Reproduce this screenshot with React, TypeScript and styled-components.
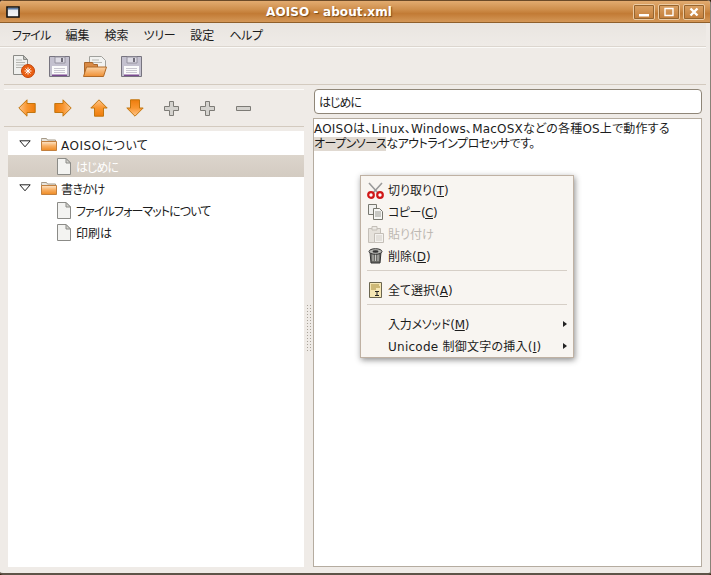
import styled, { createGlobalStyle } from "styled-components";
import type { ReactNode } from "react";

const GlobalStyle = createGlobalStyle`
  html, body {
    margin: 0;
    padding: 0;
    background: #3a2210;
  }
  * {
    box-sizing: border-box;
  }
`;

const Window = styled.div`
  width: 711px;
  height: 575px;
  display: flex;
  flex-direction: column;
  background: #efebe7;
  border-radius: 4px 4px 3px 3px;
  border-bottom: 2px solid #5e5448;
  border-right: 1px solid #8a8278;
  font-family: "DejaVu Sans", "Noto Sans CJK JP", sans-serif;
  font-size: 12px;
  font-feature-settings: "palt";
  color: #1c1c1c;
  overflow: hidden;
`;

const TitleBar = styled.div`
  height: 23px;
  flex: none;
  display: flex;
  align-items: center;
  padding: 0 5px 0 6px;
  border-top: 1px solid #6b4a28;
  border-bottom: 1px solid #8f5f2a;
  background: linear-gradient(#e2ab70 0%, #cf8f4c 40%, #c27b35 60%, #d49757 100%);
`;

const Title = styled.div`
  flex: 1;
  text-align: center;
  padding-left: 5px;
  color: #fff;
  font-family: "DejaVu Sans", sans-serif;
  font-weight: bold;
  font-size: 12px;
  letter-spacing: 0.1px;
  white-space: pre;
  text-shadow: 1px 1px 1px #7a4a18;
`;

const WinButtons = styled.div`
  display: flex;
  gap: 3px;
`;

const WinButton = styled.div`
  width: 22px;
  height: 16px;
  display: flex;
  align-items: center;
  justify-content: center;
  border: 1px solid #edcba3;
  outline: 1px solid #96652f;
  outline-offset: -2px;
  border-radius: 2px;
  background: linear-gradient(#dba265, #c27c38);
`;

const MenuBar = styled.div`
  height: 24px;
  flex: none;
  display: flex;
  align-items: center;
  gap: 15px;
  padding: 0 0 1px 12px;
  margin-right: 4px;
  background: linear-gradient(#e9e5e0, #efebe7);
  border-bottom: 1px solid #dcd6cf;
  box-shadow: 0 1px 0 #fbfaf8;
`;

const Label = styled.span<{ $tight?: number }>`
  letter-spacing: ${(p) => p.$tight ?? 0}px;
  white-space: nowrap;
`;

const ToolBar = styled.div`
  height: 38px;
  flex: none;
  display: flex;
  align-items: center;
  margin: 0 4px;
  padding: 1px 0 0 1px;
  border-bottom: 1px solid #d3cabf;
`;

const ToolButton = styled.div`
  width: 36px;
  height: 36px;
  display: flex;
  align-items: center;
  justify-content: center;
`;

const Paned = styled.div`
  flex: 1;
  min-height: 0;
  display: flex;
  padding: 4px 8px 6px 4px;
`;

const LeftPane = styled.div`
  width: 300px;
  flex: none;
  display: flex;
  flex-direction: column;
`;

const NavBar = styled.div`
  height: 38px;
  flex: none;
  display: flex;
  align-items: center;
  padding-left: 5px;
  border-top: 1px solid #fbfaf8;
  border-bottom: 1px solid #d3cabf;
`;

const Tree = styled.div`
  flex: 1;
  margin: 4px 0 0 4px;
  padding-top: 2px;
  background: #fff;
`;

const TreeRow = styled.div<{ $selected?: boolean; $depth: number }>`
  height: 22px;
  display: flex;
  align-items: center;
  gap: ${(p) => (p.$depth ? 5 : 4)}px;
  padding-left: ${(p) => (p.$depth ? 49 : 5)}px;
  background: ${(p) => (p.$selected ? "linear-gradient(#dcd5cc, #d3cbc1)" : "transparent")};
  color: ${(p) => (p.$selected ? "#fff" : "#1c1c1c")};
`;

const Expander = styled.div`
  width: 23px;
  margin-right: 1px;
  flex: none;
  display: flex;
  justify-content: center;
`;

const Gutter = styled.div`
  width: 9px;
  flex: none;
  display: flex;
  align-items: center;
  justify-content: center;
`;

const RightPane = styled.div`
  flex: 1;
  min-width: 0;
  display: flex;
  flex-direction: column;
  gap: 4px;
`;

const TitleEntry = styled.div`
  height: 25px;
  flex: none;
  margin-left: 1px;
  padding: 0 4px;
  display: flex;
  align-items: center;
  background: #fff;
  border: 1px solid #8f8678;
  border-radius: 4px;
`;

const Body = styled.div`
  position: relative;
  flex: 1;
  padding: 2px 0 0 0;
  background: #fff;
  border: 1px solid #b5aca0;
  line-height: 15px;
`;

const TextLine = styled.div<{ $tight: number }>`
  height: 15px;
  padding-top: 1px;
  white-space: nowrap;
  letter-spacing: ${(p) => p.$tight}px;
`;

const Selected = styled.span`
  background: #e0d9d1;
`;

const Menu = styled.div`
  position: absolute;
  left: 46px;
  top: 56px;
  width: 214px;
  padding: 3px 6px 0;
  background: #f8f5f1;
  border: 1px solid #bfb1a3;
  box-shadow: 1px 2px 6px rgba(0, 0, 0, 0.45);
`;

const MenuRow = styled.div<{ $disabled?: boolean }>`
  height: 22px;
  display: flex;
  align-items: center;
  gap: 4px;
  color: ${(p) => (p.$disabled ? "#bdb8b2" : "#1c1c1c")};
`;

const MenuIcon = styled.div`
  width: 17px;
  height: 17px;
  flex: none;
  display: flex;
  align-items: center;
  justify-content: center;
`;

const MenuLabel = styled.div<{ $tight?: number }>`
  flex: 1;
  padding-top: 2px;
  white-space: nowrap;
  letter-spacing: ${(p) => p.$tight ?? 0}px;
  u {
    text-underline-offset: 1px;
  }
`;

const SubArrow = styled.div`
  width: 0;
  height: 0;
  border-left: 4px solid #222;
  border-top: 3.5px solid transparent;
  border-bottom: 3.5px solid transparent;
`;

const MenuSep = styled.div`
  height: 12px;
  padding-top: 3px;
  &::after {
    content: "";
    display: block;
    height: 1px;
    background: #d6cfc7;
  }
`;

function Floppy() {
  return (
    <svg width="23" height="23" viewBox="0 0 23 23">
      <path d="M1.5 1.5h20v20h-20z" fill="#c4c1cf" stroke="#77747f" />
      <path d="M7 2h10v6H7z" fill="#dedce5" stroke="#9693a0" />
      <path d="M13 3h2v4h-2z" fill="#6f6c78" />
      <path d="M4 11h15v10H4z" fill="#fbfbfb" />
      <path d="M6 13.5h11M6 15.5h11M6 17.5h11" stroke="#c9c7d0" />
      <path d="M4 19.5h15V21H4z" fill="#7a4a90" />
    </svg>
  );
}

function NewDoc() {
  return (
    <svg width="23" height="23" viewBox="0 0 23 23">
      <path d="M1.5.5h10l4 4v15h-14z" fill="#f0f0ee" stroke="#8a8a86" />
      <path d="M11.5.5v4h4z" fill="#bdbdb8" stroke="#8a8a86" />
      <path d="M4 5h6M4 7.5h9M4 10h9M4 12.5h6" stroke="#b5b5b0" />
      <circle cx="16" cy="16" r="6.5" fill="#ea5f12" stroke="#c0440a" />
      <path d="M16 12.5v7M12.5 16h7M13.5 13.5l5 5M18.5 13.5l-5 5" stroke="#fff" strokeWidth="1" />
    </svg>
  );
}

function OpenFolder() {
  return (
    <svg width="24" height="23" viewBox="0 0 24 23">
      <defs>
        <linearGradient id="openFill" x1="0" y1="0" x2="0" y2="1">
          <stop offset="0" stopColor="#fbd3a6" />
          <stop offset="1" stopColor="#ef8f33" />
        </linearGradient>
      </defs>
      <path d="M6.5 1.5h12l4 4v10h-16z" fill="#f2f2f0" stroke="#a0a09c" />
      <path d="M9 5h7M9 7.5h10" stroke="#b9b9b4" />
      <path d="M1.5 7.5h8l1 2h4v12h-13z" fill="#d98a45" stroke="#a8652a" />
      <path d="M3.5 12h20l-3 9.5H.5z" fill="url(#openFill)" stroke="#b06a28" />
    </svg>
  );
}

function Arrow({ rotate }: { rotate: number }) {
  return (
    <svg width="18" height="18" viewBox="0 0 18 18" style={{ transform: `rotate(${rotate}deg)` }}>
      <defs>
        <linearGradient id="arrowFill" x1="0" y1="0" x2="0" y2="1">
          <stop offset="0" stopColor="#fdc58c" />
          <stop offset="0.5" stopColor="#f9962f" />
          <stop offset="1" stopColor="#ee7c0c" />
        </linearGradient>
      </defs>
      <path d="M9 .8 17.2 9H13.5V17.2H4.5V9H.8z" fill="url(#arrowFill)" stroke="#c2760f" strokeLinejoin="round" />
    </svg>
  );
}

function GrayPlus() {
  return (
    <svg width="17" height="17" viewBox="0 0 17 17">
      <path d="M6.5 1.5h4v5h5v4h-5v5h-4v-5h-5v-4h5z" fill="#d4d2ce" stroke="#7d7b76" />
    </svg>
  );
}

function GrayMinus() {
  return (
    <svg width="17" height="17" viewBox="0 0 17 17">
      <path d="M1.5 6.5h14v4h-14z" fill="#d4d2ce" stroke="#7d7b76" />
    </svg>
  );
}

function TreeTriangle() {
  return (
    <svg width="12" height="8" viewBox="0 0 12 8">
      <path d="M.8.8h10.4L6 6.8z" fill="#fff" stroke="#222" />
    </svg>
  );
}

function FolderIcon() {
  return (
    <svg width="16" height="14" viewBox="0 0 16 14">
      <defs>
        <linearGradient id="folderFill" x1="0" y1="0" x2="0" y2="1">
          <stop offset="0" stopColor="#fde6cb" />
          <stop offset="0.5" stopColor="#f7ad60" />
          <stop offset="1" stopColor="#ee8a22" />
        </linearGradient>
      </defs>
      <path d="M.5 2.5V1.5h5l1 1.5h8v9H.5z" fill="#e8e4dc" stroke="#a59a88" />
      <path d="M.5 4.5h15v9H.5z" fill="url(#folderFill)" stroke="#c2803f" />
    </svg>
  );
}

function DocIcon() {
  return (
    <svg width="14" height="17" viewBox="0 0 14 17">
      <path d="M.5.5h8.5l4.5 4.5v11.5h-13z" fill="#f3f3f1" stroke="#8b8b87" />
      <path d="M9 .5V5h4.5z" fill="#d5d5d0" stroke="#8b8b87" />
    </svg>
  );
}

function Scissors() {
  return (
    <svg width="17" height="17" viewBox="0 0 17 17">
      <path d="M2 1l9 10M15 1L6 11" stroke="#9a9a9a" strokeWidth="1.6" />
      <circle cx="4" cy="13" r="2.8" fill="#fff" stroke="#d01818" strokeWidth="2.2" />
      <circle cx="13" cy="13" r="2.8" fill="#fff" stroke="#d01818" strokeWidth="2.2" />
    </svg>
  );
}

function CopyIcon() {
  return (
    <svg width="16" height="16" viewBox="0 0 16 16">
      <path d="M.5.5h8v10h-8z" fill="#f0f0ee" stroke="#77776f" />
      <path d="M5.5 4.5h6l3 3v8h-9z" fill="#f6f6f4" stroke="#77776f" />
      <path d="M7 8h6M7 10h6M7 12h6" stroke="#9a9a94" />
    </svg>
  );
}

function PasteIcon() {
  return (
    <svg width="16" height="17" viewBox="0 0 16 17">
      <path d="M.5 2.5h12v14H.5z" fill="#e6e2dc" stroke="#c4bfb8" />
      <path d="M4 .5h5v3.5H4z" fill="#ece9e4" stroke="#c4bfb8" />
      <path d="M6.5 7.5h9v9h-9z" fill="#f4f2ef" stroke="#c4bfb8" />
      <path d="M8 10h6M8 12h6M8 14h6" stroke="#d2cdc6" />
    </svg>
  );
}

function TrashIcon() {
  return (
    <svg width="15" height="16" viewBox="0 0 15 16">
      <path d="M2 4h11l-1 11H3z" fill="#6a6a66" stroke="#333" />
      <path d="M5 6v7M7.5 6v7M10 6v7" stroke="#c8c8c4" />
      <ellipse cx="7.5" cy="3.5" rx="6.5" ry="2.8" fill="#b8b8b4" stroke="#333" />
      <ellipse cx="7.5" cy="3.5" rx="3" ry="1.2" fill="#333" />
    </svg>
  );
}

function SelectAllIcon() {
  return (
    <svg width="13" height="16" viewBox="0 0 13 16">
      <path d="M.5.5h12v15H.5z" fill="#f6e7b4" stroke="#6b6650" />
      <path d="M2 3h8M2 5h9M2 7h5" stroke="#a58a3a" />
      <path d="M6 9.5h4M8 9.5v4M6 13.5h4" stroke="#222" />
    </svg>
  );
}

function Grip() {
  const dots: ReactNode[] = [];
  for (let i = 0; i < 16; i++) {
    dots.push(<rect key={`a${i}`} x="0" y={i * 3} width="1" height="1" fill="#a8a298" />);
    dots.push(<rect key={`b${i}`} x="3" y={i * 3} width="1" height="1" fill="#a8a298" />);
  }
  return (
    <svg width="4" height="46" viewBox="0 0 4 46">
      {dots}
    </svg>
  );
}

function WindowGlyph() {
  return (
    <svg width="14" height="12" viewBox="0 0 14 12">
      <defs>
        <linearGradient id="glyphFill" x1="0" y1="0" x2="0" y2="1">
          <stop offset="0" stopColor="#dfe4ea" />
          <stop offset="1" stopColor="#f7f7f7" />
        </linearGradient>
      </defs>
      <path d="M1 1h12v10H1z" fill="url(#glyphFill)" stroke="#111" strokeWidth="1.6" />
      <path d="M2 2h10v1.5H2z" fill="#5d7ca6" />
    </svg>
  );
}

const menuItems: { name: string; tight: number }[] = [
  { name: "ファイル", tight: -0.75 },
  { name: "編集", tight: 0 },
  { name: "検索", tight: 0 },
  { name: "ツリー", tight: -0.33 },
  { name: "設定", tight: 0 },
  { name: "ヘルプ", tight: -0.33 },
];
const navIcons = [-90, 90, 0, 180];

export default function App() {
  return (
    <>
      <GlobalStyle />
      <Window>
        <TitleBar>
          <WindowGlyph />
          <Title>AOISO - about.xml</Title>
          <WinButtons>
            <WinButton>
              <svg width="12" height="10" viewBox="0 0 12 10">
                <path d="M1 7h10v2.4H1z" fill="#fff" />
              </svg>
            </WinButton>
            <WinButton>
              <svg width="10" height="10" viewBox="0 0 10 10">
                <path d="M1 1.5h8v7H1z" fill="none" stroke="#fff" strokeWidth="1.4" />
              </svg>
            </WinButton>
            <WinButton>
              <svg width="10" height="10" viewBox="0 0 10 10">
                <path d="M1.5 1.5l7 7M8.5 1.5l-7 7" stroke="#fff" strokeWidth="2.4" />
              </svg>
            </WinButton>
          </WinButtons>
        </TitleBar>
        <MenuBar>
          {menuItems.map((item) => (
            <Label key={item.name} $tight={item.tight}>
              {item.name}
            </Label>
          ))}
        </MenuBar>
        <ToolBar>
          <ToolButton>
            <NewDoc />
          </ToolButton>
          <ToolButton>
            <Floppy />
          </ToolButton>
          <ToolButton>
            <OpenFolder />
          </ToolButton>
          <ToolButton>
            <Floppy />
          </ToolButton>
        </ToolBar>
        <Paned>
          <LeftPane>
            <NavBar>
              {navIcons.map((r) => (
                <ToolButton key={r}>
                  <Arrow rotate={r} />
                </ToolButton>
              ))}
              <ToolButton>
                <GrayPlus />
              </ToolButton>
              <ToolButton>
                <GrayPlus />
              </ToolButton>
              <ToolButton>
                <GrayMinus />
              </ToolButton>
            </NavBar>
            <Tree>
              <TreeRow $depth={0}>
                <Expander>
                  <TreeTriangle />
                </Expander>
                <FolderIcon />
                <Label $tight={0.5}>AOISOについて</Label>
              </TreeRow>
              <TreeRow $depth={1} $selected>
                <DocIcon />
                <Label $tight={-1}>はじめに</Label>
              </TreeRow>
              <TreeRow $depth={0}>
                <Expander>
                  <TreeTriangle />
                </Expander>
                <FolderIcon />
                <Label $tight={-0.5}>書きかけ</Label>
              </TreeRow>
              <TreeRow $depth={1}>
                <DocIcon />
                <Label $tight={-0.9}>ファイルフォーマットについて</Label>
              </TreeRow>
              <TreeRow $depth={1}>
                <DocIcon />
                <Label>印刷は</Label>
              </TreeRow>
            </Tree>
          </LeftPane>
          <Gutter>
            <Grip />
          </Gutter>
          <RightPane>
            <TitleEntry>
              <Label $tight={-1}>はじめに</Label>
            </TitleEntry>
            <Body>
              <TextLine $tight={0.2}>AOISOは、Linux、Windows、MacOSXなどの各種OS上で動作する</TextLine>
              <TextLine $tight={-0.5}>
                <Selected>オープンソース</Selected>なアウトラインプロセッサです。
              </TextLine>
              <Menu>
                <MenuRow>
                  <MenuIcon>
                    <Scissors />
                  </MenuIcon>
                  <MenuLabel>
                    切り取り(<u>T</u>)
                  </MenuLabel>
                </MenuRow>
                <MenuRow>
                  <MenuIcon>
                    <CopyIcon />
                  </MenuIcon>
                  <MenuLabel $tight={-0.5}>
                    コピー(<u>C</u>)
                  </MenuLabel>
                </MenuRow>
                <MenuRow $disabled>
                  <MenuIcon>
                    <PasteIcon />
                  </MenuIcon>
                  <MenuLabel>貼り付け</MenuLabel>
                </MenuRow>
                <MenuRow>
                  <MenuIcon>
                    <TrashIcon />
                  </MenuIcon>
                  <MenuLabel>
                    削除(<u>D</u>)
                  </MenuLabel>
                </MenuRow>
                <MenuSep />
                <MenuRow>
                  <MenuIcon>
                    <SelectAllIcon />
                  </MenuIcon>
                  <MenuLabel>
                    全て選択(<u>A</u>)
                  </MenuLabel>
                </MenuRow>
                <MenuSep />
                <MenuRow>
                  <MenuIcon />
                  <MenuLabel $tight={-0.2}>
                    入力メソッド(<u>M</u>)
                  </MenuLabel>
                  <SubArrow />
                </MenuRow>
                <MenuRow>
                  <MenuIcon />
                  <MenuLabel $tight={0.25}>
                    Unicode 制御文字の挿入(<u>I</u>)
                  </MenuLabel>
                  <SubArrow />
                </MenuRow>
              </Menu>
            </Body>
          </RightPane>
        </Paned>
      </Window>
    </>
  );
}
